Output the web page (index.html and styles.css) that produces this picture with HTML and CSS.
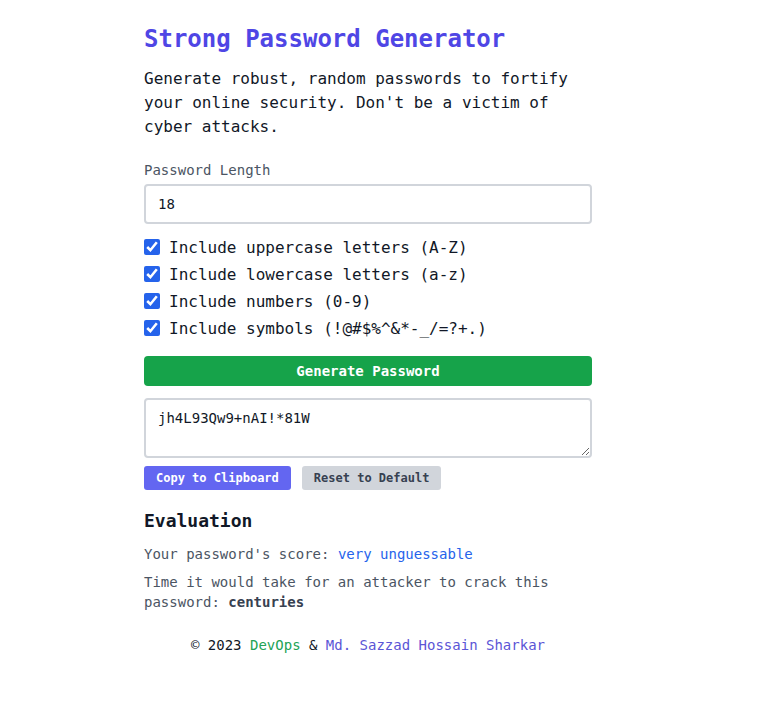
FILE: index.html
```html
<!DOCTYPE html>
<html lang="en">
<head>
<meta charset="utf-8">
<title>Strong Password Generator</title>
<link rel="stylesheet" href="styles.css">
</head>
<body>
<main class="container">
  <h1 class="title">Strong Password Generator</h1>
  <p class="intro">Generate robust, random passwords to fortify your online security. Don't be a victim of cyber attacks.</p>

  <label class="label" for="len">Password Length</label>
  <input class="field" id="len" type="text" value="18">

  <div class="options">
    <label class="option"><input type="checkbox" checked><span>Include uppercase letters (A-Z)</span></label>
    <label class="option"><input type="checkbox" checked><span>Include lowercase letters (a-z)</span></label>
    <label class="option"><input type="checkbox" checked><span>Include numbers (0-9)</span></label>
    <label class="option"><input type="checkbox" checked><span>Include symbols (!@#$%^&amp;*-_/=?+.)</span></label>
  </div>

  <button class="btn-generate">Generate Password</button>

  <textarea class="output" rows="2">jh4L93Qw9+nAI!*81W</textarea>

  <div class="actions">
    <button class="btn-small btn-copy">Copy to Clipboard</button>
    <button class="btn-small btn-reset">Reset to Default</button>
  </div>

  <h2 class="eval-title">Evaluation</h2>
  <p class="eval-line">Your password's score: <span class="score">very unguessable</span></p>
  <p class="eval-line eval-time">Time it would take for an attacker to crack this password: <strong>centuries</strong></p>

  <footer class="footer">© 2023 <span class="devops">DevOps</span> &amp; <span class="author">Md. Sazzad Hossain Sharkar</span></footer>
</main>
</body>
</html>
```

FILE: styles.css
```css
* { box-sizing: border-box; }

html, body {
  margin: 0;
  padding: 0;
  background: #ffffff;
}

body {
  font-family: "DejaVu Sans Mono", "Liberation Mono", monospace;
  color: #111827;
}

.container {
  width: 448px;
  margin-left: 144px;
  padding-top: 23px;
  display: flex;
  flex-direction: column;
}

.title {
  margin: 0 0 12px;
  font-size: 24px;
  line-height: 32px;
  font-weight: 700;
  color: #4f46e5;
}

.intro {
  margin: 0 0 21px;
  font-size: 16px;
  line-height: 24px;
  color: #111827;
}

.label {
  font-size: 14px;
  line-height: 20px;
  color: #4b5563;
  margin-bottom: 4px;
}

.field {
  width: 100%;
  height: 40px;
  border: 2px solid #d1d5db;
  border-radius: 4px;
  padding: 0 12px;
  font-family: inherit;
  font-size: 14px;
  color: #111827;
  outline: none;
}

.options {
  display: flex;
  flex-direction: column;
  gap: 3px;
  margin-top: 11px;
}

.option {
  display: flex;
  align-items: center;
  height: 24px;
  font-size: 16px;
  color: #111827;
}

.option input {
  width: 16px;
  height: 16px;
  margin: 0 9px 0 0;
  accent-color: #2563eb;
}

.btn-generate {
  margin-top: 16px;
  height: 30px;
  border: none;
  border-radius: 4px;
  background: #16a34a;
  color: #ffffff;
  font-family: inherit;
  font-size: 14px;
  font-weight: 700;
}

.output {
  margin-top: 12px;
  width: 100%;
  height: 60px;
  border: 2px solid #d1d5db;
  border-radius: 4px;
  padding: 8px 12px;
  font-family: inherit;
  font-size: 14px;
  line-height: 20px;
  color: #111827;
  resize: vertical;
  outline: none;
}

.actions {
  display: flex;
  gap: 11px;
  margin-top: 8px;
}

.btn-small {
  height: 24px;
  padding: 0 12px;
  border: none;
  border-radius: 3px;
  font-family: inherit;
  font-size: 12px;
  font-weight: 700;
}

.btn-copy {
  background: #6366f1;
  color: #ffffff;
}

.btn-reset {
  background: #d1d5db;
  color: #374151;
}

.eval-title {
  margin: 17px 0 9px;
  font-size: 18px;
  line-height: 28px;
  font-weight: 700;
  color: #111827;
}

.eval-line {
  margin: 0 0 8px;
  font-size: 14px;
  line-height: 20px;
  color: #4b5563;
}

.score {
  color: #2563eb;
}

.eval-time strong {
  color: #374151;
}

.footer {
  margin-top: 15px;
  text-align: center;
  font-size: 14px;
  line-height: 20px;
  color: #111827;
}

.devops {
  color: #22a355;
}

.author {
  color: #5b55d6;
}
```
